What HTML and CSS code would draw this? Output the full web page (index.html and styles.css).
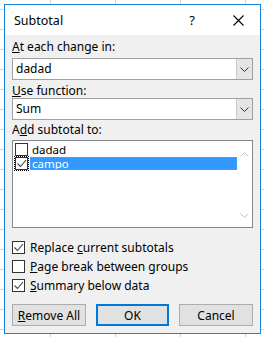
FILE: index.html
```html
<!DOCTYPE html>
<html lang="en">
<head>
  <meta charset="UTF-8">
  <title>Subtotal</title>
  <link rel="stylesheet" href="styles.css">
</head>
<body>
  <div class="dialog">
    <div class="titlebar">
      <span class="title">Subtotal</span>
      <span class="help">?</span>
      <svg class="close" width="11" height="11" viewBox="0 0 11 11">
        <path d="M0.5 0.5 L10.5 10.5 M10.5 0.5 L0.5 10.5" stroke="#000" stroke-width="1.1" fill="none"/>
      </svg>
    </div>
    <div class="content">
      <div class="label"><u>A</u>t each change in:</div>
      <div class="combo">
        <span class="combo-value">dadad</span>
        <span class="combo-btn">
          <svg width="9" height="5" viewBox="0 0 9 5"><path d="M0.5 0.5 L4.5 4.5 L8.5 0.5" stroke="#333" fill="none"/></svg>
        </span>
      </div>
      <div class="label label-2"><u>U</u>se function:</div>
      <div class="combo">
        <span class="combo-value">Sum</span>
        <span class="combo-btn">
          <svg width="9" height="5" viewBox="0 0 9 5"><path d="M0.5 0.5 L4.5 4.5 L8.5 0.5" stroke="#333" fill="none"/></svg>
        </span>
      </div>
      <div class="label label-3">A<u>d</u>d subtotal to:</div>
      <div class="listbox">
        <div class="list-items">
          <div class="list-row">
            <span class="box"></span>
            <span class="item-text">dadad</span>
          </div>
          <div class="list-row">
            <span class="box checked focus">
              <svg width="11" height="11" viewBox="0 0 11 11"><path d="M1.5 5.5 L4.5 8.5 L10 2" stroke="#444" stroke-width="1.1" fill="none"/></svg>
            </span>
            <span class="item-text selected">campo</span>
          </div>
        </div>
        <div class="scrollbar">
          <svg width="9" height="5" viewBox="0 0 9 5"><path d="M0.5 4.5 L4.5 0.5 L8.5 4.5" stroke="#c2c2c2" fill="none"/></svg>
          <svg width="9" height="5" viewBox="0 0 9 5"><path d="M0.5 0.5 L4.5 4.5 L8.5 0.5" stroke="#c2c2c2" fill="none"/></svg>
        </div>
      </div>
      <div class="options">
        <div class="option">
          <span class="box checked">
            <svg width="11" height="11" viewBox="0 0 11 11"><path d="M1.5 5.5 L4.5 8.5 L10 2" stroke="#444" stroke-width="1.1" fill="none"/></svg>
          </span>
          <span>Replace <u>c</u>urrent subtotals</span>
        </div>
        <div class="option">
          <span class="box"></span>
          <span><u>P</u>age break between groups</span>
        </div>
        <div class="option">
          <span class="box checked">
            <svg width="11" height="11" viewBox="0 0 11 11"><path d="M1.5 5.5 L4.5 8.5 L10 2" stroke="#444" stroke-width="1.1" fill="none"/></svg>
          </span>
          <span><u>S</u>ummary below data</span>
        </div>
      </div>
      <div class="buttons">
        <button><u>R</u>emove All</button>
        <button class="default">OK</button>
        <button>Cancel</button>
      </div>
    </div>
  </div>
</body>
</html>
```

FILE: styles.css
```css
body {
  margin: 0;
  height: 337px;
  font-family: "Noto Sans", "Open Sans", sans-serif;
  font-size: 12px;
  color: #000;
  background-color: #fff;
  background-image:
    linear-gradient(to right, #d4d4d4 1px, transparent 1px),
    linear-gradient(to bottom, #d4d4d4 1px, transparent 1px);
  background-size: 65px 20px;
  background-position: 50px 9px;
  padding: 4px;
  box-sizing: border-box;
}

.dialog {
  width: 257px;
  height: 330px;
  border: 1px solid #1883d7;
  box-sizing: border-box;
  background: #f0f0f0;
  display: flex;
  flex-direction: column;
}

.titlebar {
  height: 30px;
  background: #fff;
  display: flex;
  align-items: center;
  padding: 0 16px 0 9px;
}

.title {
  flex: 1;
  font-size: 12.5px;
}

.help {
  font-size: 13px;
  margin-right: 38px;
}

.content {
  padding: 4px 7px 0 7px;
  display: flex;
  flex-direction: column;
}

.label {
  line-height: 16px;
  margin-bottom: 3px;
}

.label-2 {
  margin-top: 3px;
  margin-bottom: 0;
  line-height: 15px;
}

.label-3 {
  margin-top: 2px;
  line-height: 15px;
}

.combo {
  height: 22px;
  border: 1px solid #a0a0a0;
  background: #fff;
  display: flex;
  box-sizing: border-box;
}

.combo-value {
  flex: 1;
  line-height: 20px;
  padding-left: 3px;
}

.combo-btn {
  width: 15px;
  background: #e5e5e5;
  border-left: 1px solid #c8c8c8;
  display: flex;
  align-items: center;
  justify-content: center;
}

.listbox {
  height: 88px;
  border: 1px solid #828790;
  background: #fff;
  box-sizing: border-box;
  display: flex;
  padding: 1px 0 1px 2px;
}

.list-items {
  flex: 1;
}

.list-row {
  height: 14px;
  display: flex;
  align-items: center;
}

.list-row .box {
  margin-right: 2px;
}

.item-text {
  flex: 1;
  font-size: 11.5px;
  line-height: 13px;
  padding-left: 2px;
}

.item-text.selected {
  background: #3399ff;
  color: #fff;
  outline: 1px dotted #d08030;
  outline-offset: -1px;
}

.scrollbar {
  width: 15px;
  display: flex;
  flex-direction: column;
  justify-content: space-between;
  align-items: center;
  padding: 10px 0 8px;
}

.box {
  width: 13px;
  height: 13px;
  border: 1px solid #333;
  background: #fff;
  box-sizing: border-box;
  display: flex;
  align-items: center;
  justify-content: center;
  flex-shrink: 0;
}

.box.focus {
  outline: 1px dotted #000;
  outline-offset: 0;
}

.options {
  padding-top: 10px;
}

.option {
  height: 19px;
  display: flex;
  align-items: center;
  gap: 5px;
}

.buttons {
  margin-top: 9px;
  display: flex;
  justify-content: space-between;
}

.buttons button {
  width: 74px;
  height: 22px;
  font-family: inherit;
  font-size: 12px;
  color: #000;
  background: #e1e1e1;
  border: 1px solid #adadad;
  padding: 0;
}

.buttons button.default {
  width: 73px;
  border: 2px solid #0078d7;
}
```
